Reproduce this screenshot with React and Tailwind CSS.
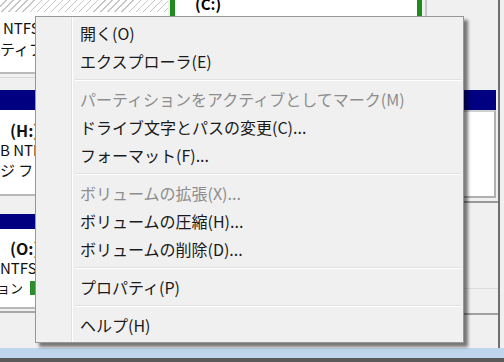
const menu = [
  { label: "開く(O)" },
  { label: "エクスプローラ(E)" },
  { sep: true },
  { label: "パーティションをアクティブとしてマーク(M)", disabled: true },
  { label: "ドライブ文字とパスの変更(C)..." },
  { label: "フォーマット(F)..." },
  { sep: true },
  { label: "ボリュームの拡張(X)...", disabled: true },
  { label: "ボリュームの圧縮(H)..." },
  { label: "ボリュームの削除(D)..." },
  { sep: true },
  { label: "プロパティ(P)" },
  { sep: true },
  { label: "ヘルプ(H)" },
]

function LeftColumn() {
  return (
    <div className="w-[168px] flex flex-col text-[15px] text-[#111]">
      <div className="h-[74px] flex flex-col pt-[12px] bg-[repeating-linear-gradient(135deg,#ffffff_0px,#ffffff_4px,#c4c4c4_4px,#c4c4c4_5px)]">
        <div className="flex-1 bg-white border-b-2 border-[#b9b9b9] pt-[5px] leading-[21px] whitespace-nowrap">
          <div className="pl-[3px]">NTFS</div>
          <div>ティブ パーティション</div>
        </div>
      </div>
      <div className="h-[4px] border-b border-[#d6d6d6]" />
      <div className="h-[12px]" />
      <div className="h-[20px] bg-[#000080]" />
      <div className="h-[86px] bg-white border-b-2 border-[#b9b9b9] pt-[10px] leading-[20px] whitespace-nowrap">
        <div className="font-bold text-[16px] pl-[10px]">(H:)</div>
        <div>B NTFS</div>
        <div>ジ ファイル</div>
      </div>
      <div className="h-[18px]" />
      <div className="h-[15px] bg-[#000080]" />
      <div className="h-[80px] bg-white border-b-2 border-[#b9b9b9] pt-[9px] leading-[20px] whitespace-nowrap">
        <div className="font-bold text-[16px] pl-[10px]">(O:)</div>
        <div>NTFS</div>
        <div className="flex items-center">
          <span className="w-[30px] overflow-hidden flex justify-end pr-[7px] text-[13px]">
            <span className="whitespace-nowrap">パーティション</span>
          </span>
          <span className="w-[5px] h-[14px] bg-[#2e8b2e]" />
        </div>
      </div>
      <div className="h-[4px] border-b-2 border-[#a8a8a8]" />
    </div>
  )
}

function MiddleColumn() {
  return (
    <div className="w-[257px] flex flex-col">
      <div className="h-[17px] flex border-b border-[#c8c8c8]">
        <div className="w-[252px] flex bg-white border-x-[5px] border-[#1f8a1f] overflow-hidden">
          <div className="pl-[20px] -mt-[6px] font-bold text-[15px] leading-[20px]">(C:)</div>
        </div>
        <div className="flex-1 border-r-2 border-[#c8c8c8]" />
      </div>
    </div>
  )
}

function RightColumn() {
  return (
    <div className="w-[73px] flex flex-col border-r-2 border-[#6f6f6f] mr-[4px]">
      <div className="h-[90px]" />
      <div className="pl-[37px] pr-[2px] flex flex-col">
        <div className="h-[20px] bg-[#000080]" />
        <div className="h-[88px] bg-white border-t-2 border-[#d0d0d0] border-r-2 border-b-2 border-r-[#b0b0b0] border-b-[#b0b0b0]" />
      </div>
      <div className="h-[5px] border-b-2 border-[#9a9a9a]" />
      <div className="h-[86px] border-b border-[#dcdcdc]" />
      <div className="h-[26px] border-b-2 border-[#a0a0a0]" />
    </div>
  )
}

export default function App() {
  return (
    <div className="relative w-[504px] h-[362px] overflow-hidden bg-[#f0f0f0] font-['Noto_Sans_CJK_JP','Noto_Sans',sans-serif]">
      <div className="flex h-[348px]">
        <LeftColumn />
        <div className="w-[2px]" />
        <MiddleColumn />
        <RightColumn />
      </div>
      <div className="h-[10px] bg-[#bfd5ec]" />
      <div className="h-[4px] bg-[#5a5a5a]" />

      <div className="absolute left-[35px] top-[16px] w-[429px] border border-[#979797] bg-[#f0f0f0] pt-[2px] pb-[3px] px-[2px] shadow-[4px_4px_3px_rgba(0,0,0,0.5)]">
        <div className="absolute left-[35px] top-0 bottom-0 w-[2px] border-l border-[#e2e2e2] border-r border-r-white" />
        {menu.map((m, i) =>
          m.sep ? (
            <div key={i} className="h-[10px] flex flex-col justify-center pl-[37px]">
              <div className="border-t border-[#e0e0e0] border-b border-b-white" />
            </div>
          ) : (
            <div
              key={i}
              className={
                "relative h-[28px] flex items-center pl-[42px] text-[16px] whitespace-nowrap " +
                (m.disabled ? "text-[#8d8d8d]" : "text-[#1a1a1a]")
              }
            >
              {m.label}
            </div>
          )
        )}
      </div>
    </div>
  )
}
